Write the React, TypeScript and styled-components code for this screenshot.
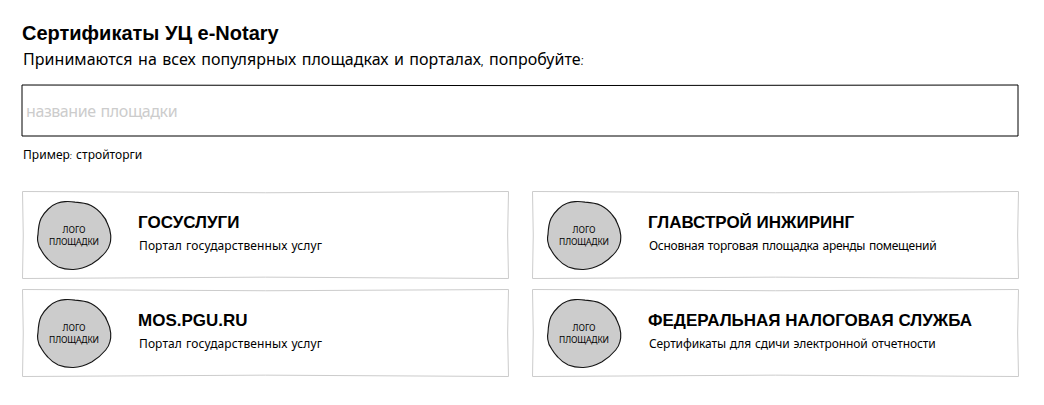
import React from 'react';
import styled, { createGlobalStyle } from 'styled-components';

const GlobalStyle = createGlobalStyle`
  *, *::before, *::after { box-sizing: border-box; }
  body { margin: 0; background: #fff; color: #000; }
`;

const hand = `'Comic Sans MS', 'Comic Neue', 'Noto Sans', sans-serif`;

const Page = styled.main`
  width: 1044px;
  height: 405px;
  padding: 21px 25px 0 22px;
  font-family: ${hand};
`;

const Heading = styled.h1`
  margin: 0;
  font: bold 20px/24px 'Liberation Sans', Arial, sans-serif;
  white-space: nowrap;
`;

const Line = styled.p<{ $size: number; $height: number; $spacing?: number }>`
  margin: 0;
  padding-left: 1px;
  font-size: ${p => p.$size}px;
  line-height: ${p => p.$height}px;
  letter-spacing: ${p => p.$spacing ?? 0}px;
  white-space: nowrap;
`;

const Field = styled.label`
  position: relative;
  display: flex;
  width: 997px;
  height: 53px;
  margin-top: 8px;
`;

const Input = styled.input`
  width: 100%;
  padding: 2px 4px 0;
  border: 0;
  outline: 0;
  background: transparent;
  font-family: ${hand};
  font-size: 16px;
  letter-spacing: -0.42px;
  &::placeholder { color: #ccc; opacity: 1; }
`;

const Outline = styled.svg`
  position: absolute;
  inset: 0;
  overflow: visible;
  fill: none;
  pointer-events: none;
`;

const Grid = styled.section`
  display: grid;
  grid-template-columns: 487px 487px;
  grid-auto-rows: 88px;
  gap: 10px 23px;
  margin-top: 18px;
`;

const Card = styled.article`
  position: relative;
  display: flex;
  padding: 10px 15px;
`;

const Logo = styled.div`
  position: relative;
  display: flex;
  flex-direction: column;
  align-items: center;
  width: 74px;
  height: 70px;
  padding-top: 23px;
  font-size: 8.5px;
  line-height: 12px;
`;

const Word = styled.span<{ $spacing: number }>`
  position: relative;
  letter-spacing: ${p => p.$spacing}px;
`;

const Info = styled.div`
  padding: 12px 0 0 27px;
`;

const Title = styled.h2`
  margin: 0;
  font: bold 17px/20px 'Liberation Sans', Arial, sans-serif;
  white-space: nowrap;
`;

const portals = [
  { title: 'ГОСУСЛУГИ', text: 'Портал государственных услуг', spacing: 0.1 },
  { title: 'ГЛАВСТРОЙ ИНЖИРИНГ', text: 'Основная торговая площадка аренды помещений', spacing: -0.27 },
  { title: 'MOS.PGU.RU', text: 'Портал государственных услуг', spacing: 0.1 },
  { title: 'ФЕДЕРАЛЬНАЯ НАЛОГОВАЯ СЛУЖБА', text: 'Сертификаты для сдичи электронной отчетности', spacing: -0.11 },
];

function PortalLogo() {
  return (
    <Logo>
      <Outline width="75" height="70" viewBox="0 0 75 70">
        <path
          d="M28 .6 Q33 .3 38 1.1 Q48 1.7 54 4.4 Q61 8 65.3 14 Q69 18 70.3 22.3 Q73.2 28 73.7 34 Q74 39 73 42.5 Q72 47 68.7 51 Q63 58 54.7 63 Q45 68.2 36.3 68.5 Q28 68.7 21.3 66 Q15 63 10.7 58 Q7 54 5 50.5 Q1.2 45.5 .8 40.5 Q.2 37 1 33.5 Q1.5 23 4 17.5 Q7 12 11.3 8 Q16 3.5 20 2.2 Q24 .8 28 .6Z"
          fill="#ccc"
          stroke="#161616"
          strokeWidth="1.15"
        />
      </Outline>
      <Word $spacing={0}>ЛОГО</Word>
      <Word $spacing={-0.1}>ПЛОЩАДКИ</Word>
    </Logo>
  );
}

export default function App() {
  return (
    <>
      <GlobalStyle />
      <Page>
        <Heading>Сертификаты УЦ e-Notary</Heading>
        <Line $size={16} $height={31} $spacing={0.04}>
          Принимаются на всех популярных площадках и порталах, попробуйте:
        </Line>
        <Field>
          <Input placeholder="название площадки" />
          <Outline width="997" height="53" viewBox="0 0 997 53">
            <path d="M0 1 Q498 2.2 996 1 V52 H0Z" stroke="#000" />
          </Outline>
        </Field>
        <Line $size={12} $height={36} $spacing={0.03}>Пример: стройторги</Line>
        <Grid>
          {portals.map(portal => (
            <Card key={portal.title}>
              <Outline width="487" height="88" viewBox="0 0 487 88">
                <path
                  d="M.5 .5 Q243 3 486.5 .5 Q484.8 44 486.5 87.5 Q243 84.8 .5 87.5 Q2 44 .5 .5Z"
                  stroke="#ccc"
                />
              </Outline>
              <PortalLogo />
              <Info>
                <Title>{portal.title}</Title>
                <Line $size={12} $height={26} $spacing={portal.spacing}>{portal.text}</Line>
              </Info>
            </Card>
          ))}
        </Grid>
      </Page>
    </>
  );
}
